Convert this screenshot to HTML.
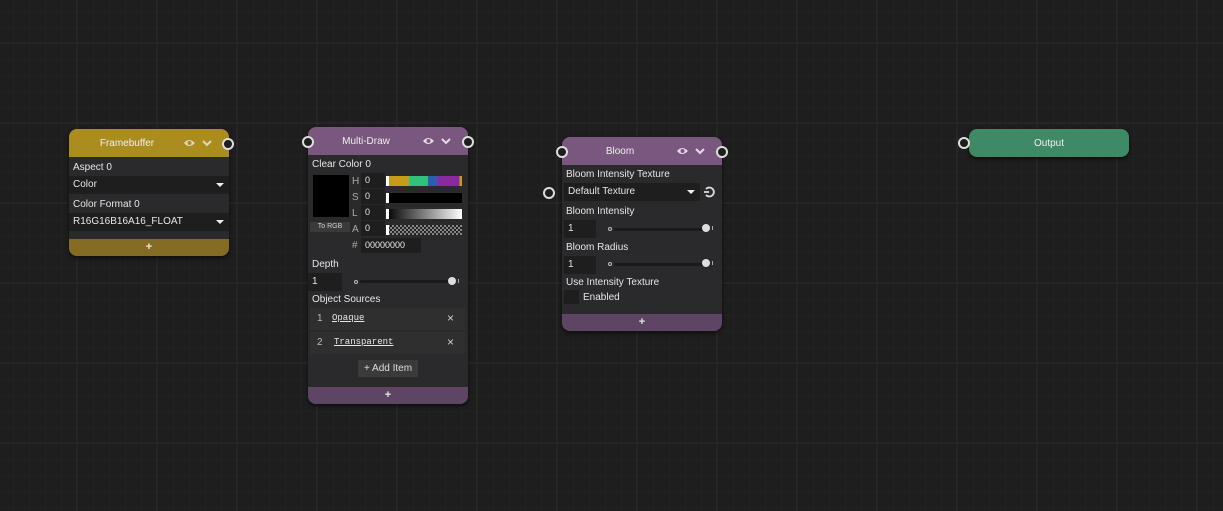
<!DOCTYPE html><html><head><style>
*{margin:0;padding:0;box-sizing:border-box}
body{width:1223px;height:511px;overflow:hidden;background-color:#1e1e1e;
background-image:linear-gradient(#262626 2px,transparent 2px),linear-gradient(90deg,#262626 2px,transparent 2px),linear-gradient(#222 1px,transparent 1px),linear-gradient(90deg,#222 1px,transparent 1px);
background-size:80px 80px,80px 80px,16px 16px,16px 16px;background-position:0 42px,76px 0,0 11px,13px 0;
font-family:"Liberation Sans",sans-serif;font-size:10px;color:#e6e6e6;position:relative}
.a{position:absolute}
.node{position:absolute;width:160px;background:#2a2a2c;border-radius:8px;box-shadow:0 2px 4px rgba(0,0,0,.6)}
.hd{height:28px;border-radius:8px 8px 0 0;text-align:center;line-height:30px;font-size:10px;color:#eee;position:relative;padding-right:44px}
.ft{position:absolute;left:0;right:0;bottom:0;height:17px;border-radius:0 0 8px 8px;text-align:center;line-height:17px;font-weight:bold;font-size:11px}
.pin{position:absolute;width:12px;height:12px;border:2px solid #ddd;border-radius:50%;background:#1e1e1e}
.lbl{position:absolute;left:4px;font-size:10px}
.fld{position:absolute;background:#1e1e1f;height:18px;line-height:18px;padding-left:4px;font-size:10px}
.dd:after{content:"";position:absolute;right:5px;top:7px;border:4px solid transparent;border-top:4px solid #eee;border-bottom:0}
.sl{position:absolute;height:3px;background:#1a1a1a;border-radius:2px}
.knob{position:absolute;width:8px;height:8px;border-radius:50%;background:#ddd}
.dot{position:absolute;width:4px;height:4px;border-radius:50%;border:1px solid #bbb}
.mk{position:absolute;left:78px;width:3px;height:10px;background:#fff}
</style></head><body>

<!-- Framebuffer -->
<div class="node" style="left:69px;top:129px;height:127px">
<div class="hd" style="background:#ab8d1f">Framebuffer
<svg class="a" style="left:114px;top:9px" width="30" height="10"><path d="M1 5 Q6 -1 12 5 Q6 11 1 5Z" fill="#e0d8b8"/><circle cx="6.5" cy="5" r="2" fill="#ab8d1f"/><path d="M20 3 L24 7 L28 3" stroke="#e0d8b8" stroke-width="2" fill="none"/></svg></div>
<div class="lbl" style="top:33px">Aspect 0</div>
<div class="fld dd" style="left:0;top:47px;width:160px">Color</div>
<div class="lbl" style="top:70px">Color Format 0</div>
<div class="fld dd" style="left:0;top:84px;width:160px">R16G16B16A16_FLOAT</div>
<div class="ft" style="background:#856c23">+</div>
</div>
<div class="pin" style="left:222px;top:138px"></div>

<!-- Multi-Draw -->
<div class="node" style="left:308px;top:127px;height:277px">
<div class="hd" style="background:#7a577e">Multi-Draw
<svg class="a" style="left:114px;top:9px" width="30" height="10"><path d="M1 5 Q6 -1 12 5 Q6 11 1 5Z" fill="#e5dbe6"/><circle cx="6.5" cy="5" r="2" fill="#7a577e"/><path d="M20 3 L24 7 L28 3" stroke="#e5dbe6" stroke-width="2" fill="none"/></svg></div>
<div class="lbl" style="top:32px">Clear Color 0</div>
<div class="a" style="left:5px;top:48px;width:36px;height:42px;background:#000"></div>
<div class="a" style="left:2px;top:95px;width:40px;height:10px;background:#3a3a3a;font-size:7px;text-align:center;line-height:10px;color:#ccc">To RGB</div>
<div class="a" style="left:44px;top:47px;color:#aaa;line-height:16px">H<br>S<br>L<br>A</div>
<div class="fld" style="left:53px;top:46px;width:24px;height:15px;line-height:15px;font-size:9px">0</div>
<div class="fld" style="left:53px;top:62px;width:24px;height:15px;line-height:15px;font-size:9px">0</div>
<div class="fld" style="left:53px;top:78px;width:24px;height:15px;line-height:15px;font-size:9px">0</div>
<div class="fld" style="left:53px;top:94px;width:24px;height:15px;line-height:15px;font-size:9px">0</div>
<div class="a" style="left:78px;top:49px;width:76px;height:10px;background:linear-gradient(90deg,#c59d18 0 30%,#2ec27a 30% 55%,#2d5fb0 55% 68%,#8a2aa0 68% 97%,#c59d18 97%)"></div>
<div class="a" style="left:78px;top:66px;width:76px;height:10px;background:#000"></div>
<div class="a" style="left:78px;top:82px;width:76px;height:10px;background:linear-gradient(90deg,#000,#fff)"></div>
<div class="a" style="left:78px;top:98px;width:76px;height:10px;background:repeating-conic-gradient(#888 0 25%,#222 0 50%) 0 0/4px 4px"></div>
<div class="mk" style="top:49px"></div><div class="mk" style="top:66px"></div><div class="mk" style="top:82px"></div><div class="mk" style="top:98px"></div>
<div class="a" style="left:44px;top:113px;color:#aaa">#</div>
<div class="fld" style="left:53px;top:111px;width:60px;height:15px;line-height:15px;font-size:9px">00000000</div>
<div class="lbl" style="top:132px">Depth</div>
<div class="fld" style="left:0;top:146px;width:34px">1</div>
<div class="dot" style="left:46px;top:153px"></div>
<div class="sl" style="left:52px;top:153px;width:96px"></div>
<div class="knob" style="left:140px;top:150px"></div>
<div class="a" style="left:150px;top:152px;width:1px;height:4px;background:#aaa"></div>
<div class="lbl" style="top:167px">Object Sources</div>
<div class="a" style="left:2px;top:181px;width:155px;height:22px;background:#2f2f30"></div>
<div class="a" style="left:9px;top:186px;color:#bbb">1</div>
<div class="a" style="left:24px;top:186px;font-family:'Liberation Mono',monospace;font-size:9px;text-decoration:underline">Opaque</div>
<div class="a" style="left:139px;top:184px;font-size:12px;color:#ccc">×</div>
<div class="a" style="left:2px;top:205px;width:155px;height:22px;background:#2f2f30"></div>
<div class="a" style="left:9px;top:210px;color:#bbb">2</div>
<div class="a" style="left:26px;top:210px;font-family:'Liberation Mono',monospace;font-size:9px;text-decoration:underline">Transparent</div>
<div class="a" style="left:139px;top:208px;font-size:12px;color:#ccc">×</div>
<div class="a" style="left:50px;top:233px;width:60px;height:17px;background:#3a3a3b;text-align:center;line-height:17px;color:#ddd">+ Add Item</div>
<div class="ft" style="background:#5f4564">+</div>
</div>
<div class="pin" style="left:302px;top:136px"></div>
<div class="pin" style="left:462px;top:136px"></div>

<!-- Bloom -->
<div class="node" style="left:562px;top:137px;height:194px">
<div class="hd" style="background:#7a577e">Bloom
<svg class="a" style="left:114px;top:9px" width="30" height="10"><path d="M1 5 Q6 -1 12 5 Q6 11 1 5Z" fill="#e5dbe6"/><circle cx="6.5" cy="5" r="2" fill="#7a577e"/><path d="M20 3 L24 7 L28 3" stroke="#e5dbe6" stroke-width="2" fill="none"/></svg></div>
<div class="lbl" style="top:32px">Bloom Intensity Texture</div>
<div class="fld dd" style="left:2px;top:46px;width:136px">Default Texture</div>
<svg class="a" style="left:141px;top:49px" width="12" height="12"><path d="M3 3 A4.5 4.5 0 1 1 3 9" stroke="#ddd" stroke-width="1.8" fill="none"/><path d="M1 6 L6 6" stroke="#ddd" stroke-width="1.8"/></svg>
<div class="lbl" style="top:69px">Bloom Intensity</div>
<div class="fld" style="left:2px;top:83px;width:32px">1</div>
<div class="dot" style="left:46px;top:90px"></div>
<div class="sl" style="left:52px;top:91px;width:92px"></div>
<div class="knob" style="left:140px;top:87px"></div>
<div class="a" style="left:150px;top:89px;width:1px;height:4px;background:#aaa"></div>
<div class="lbl" style="top:105px">Bloom Radius</div>
<div class="fld" style="left:2px;top:119px;width:32px">1</div>
<div class="dot" style="left:46px;top:125px"></div>
<div class="sl" style="left:52px;top:126px;width:92px"></div>
<div class="knob" style="left:140px;top:122px"></div>
<div class="a" style="left:150px;top:124px;width:1px;height:4px;background:#aaa"></div>
<div class="lbl" style="top:140px">Use Intensity Texture</div>
<div class="a" style="left:2px;top:153px;width:15px;height:14px;background:#1e1e1f"></div>
<div class="a" style="left:21px;top:155px">Enabled</div>
<div class="ft" style="background:#5f4564">+</div>
</div>
<div class="pin" style="left:556px;top:146px"></div>
<div class="pin" style="left:716px;top:146px"></div>
<div class="pin" style="left:543px;top:187px"></div>

<!-- Output -->
<div class="node" style="left:969px;top:129px;height:28px;background:#3f8a66"><div class="hd" style="border-radius:8px;padding-right:0">Output</div></div>
<div class="pin" style="left:958px;top:137px"></div>
</body></html>
